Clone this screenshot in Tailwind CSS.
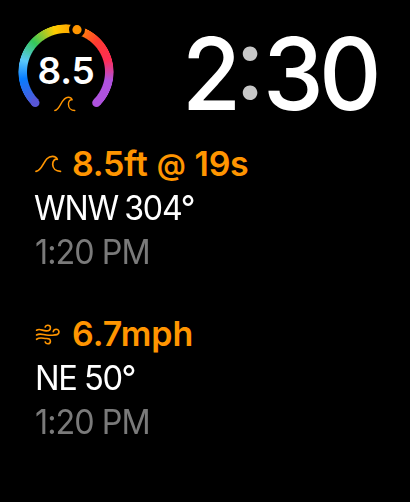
<!DOCTYPE html>
<html lang="en">
<head>
<meta charset="utf-8">
<title>Surf</title>
<script src="https://cdn.jsdelivr.net/npm/@tailwindcss/browser@4"></script>
</head>
<body class="bg-black">
<svg class="hidden">
  <symbol id="wave" viewBox="0 0 27 18"><path d="M1 16.300C8.500 15.500 8.500 1.300 17.500 1.300C19.800 1.300 21.500 2.200 22.300 4.300C19.500 3.800 17.700 6 17.700 9.200C17.700 13.500 21 16.300 25.500 16.300" fill="none" stroke="currentColor" stroke-width="1.700" stroke-linecap="round" stroke-linejoin="round"/></symbol>
</svg>
<main class="flex h-[502px] w-[410px] flex-col overflow-hidden bg-black font-['Inter','Liberation_Sans',sans-serif] text-white">
  <header class="flex h-[132px] pt-6 pl-[18px]">
    <div class="relative h-24 w-24 shrink-0">
      <div class="h-24 w-24 rounded-full bg-[conic-gradient(from_225deg,#5856d6_0deg,#087cff_36deg,#5ac8fa_60deg,#34c759_88deg,#ffcc00_120deg,#ff9500_150deg,#ff3b30_180deg,#ff2d55_209deg,#af52de_236deg,#af52de_270deg,transparent_270deg)] [mask-image:radial-gradient(circle,transparent_38.500px,black_39.500px,black_47.200px,transparent_48px)]"></div>
      <svg class="absolute inset-0 h-24 w-24" viewBox="0 0 96 96">
        <circle cx="17.200" cy="78.800" r="4.300" fill="#5856d6"/>
        <circle cx="78.500" cy="78.800" r="4.300" fill="#af52de"/>
        <circle cx="59" cy="5.700" r="8" fill="#000"/>
        <circle cx="59" cy="5.700" r="4.600" fill="#ff9500"/>
      </svg>
      <div class="absolute inset-x-0 top-[27px] text-center text-[37px] leading-10 font-semibold tracking-[-0.2px]">8.5</div>
      <svg class="absolute top-[72px] left-[36px] h-[16px] w-[22px] text-[#ff9500]" viewBox="0 0 27 18" preserveAspectRatio="none"><use href="#wave"/></svg>
    </div>
    <div class="ml-[68px] flex h-[98px] items-center text-[101px] leading-none font-medium">
      <span class="w-[54px] origin-left scale-x-[0.95]">2</span>
      <span class="flex w-[28px] justify-center pb-[21px] text-[#c7c7c7]">:</span>
      <span class="-ml-px origin-left scale-x-[0.96] tracking-[-5px]">30</span>
    </div>
  </header>
  <section class="flex h-[170px] flex-col pt-[10px] pl-[35px] text-[34px] leading-[44px] whitespace-nowrap">
    <div class="flex h-11 items-center font-semibold text-[#ff9500]">
      <svg class="mr-[10px] h-[18px] w-[27px] shrink-0"><use href="#wave"/></svg>
      <span class="tracking-[-0.3px] [word-spacing:1px]">8.5ft <span class="align-[1px] text-[29px] leading-none">@</span> 19s</span>
    </div>
    <div class="-ml-px h-11 origin-left scale-x-[0.945] tracking-[-1.300px] [word-spacing:-1.500px]">WNW 304°</div>
    <div class="h-11 origin-left scale-x-[0.95] tracking-[-1px] text-[#7a7a7a]">1:20 PM</div>
  </section>
  <section class="flex flex-col pt-[10px] pl-[35px] text-[34px] leading-[44px] whitespace-nowrap">
    <div class="flex h-11 items-center font-semibold text-[#ff9500]">
      <svg class="mr-[10px] h-[21px] w-[27px] shrink-0" viewBox="0 0 28 22" fill="none" stroke="currentColor" stroke-width="1.700" stroke-linecap="round" stroke-linejoin="round"><path d="M1.500 6.500C5 4.200 8 7.500 12 7.200C15 7 16 5.500 16 3.800C16 2.300 15 1.300 13.300 1.300C12 1.300 11 2 10.500 3.200M1.500 11.500C6 8.800 9 12.200 15 11.800C20 11.500 25 12.500 25 8.500C25 6.700 23.700 5.500 22 5.500C20.300 5.500 19.300 6.500 19 8M1.500 16C5 13.500 8 15.200 12 15.200C14.500 15.200 16 16.200 16 18C16 19.700 15 20.700 13.300 20.700C12 20.700 11 20 10.500 18.800"/></svg>
      <span>6.7mph</span>
    </div>
    <div class="h-11 origin-left scale-x-[0.96] tracking-[-1.500px]">NE 50°</div>
    <div class="h-11 origin-left scale-x-[0.95] tracking-[-1px] text-[#7a7a7a]">1:20 PM</div>
  </section>
</main>
</body>
</html>
